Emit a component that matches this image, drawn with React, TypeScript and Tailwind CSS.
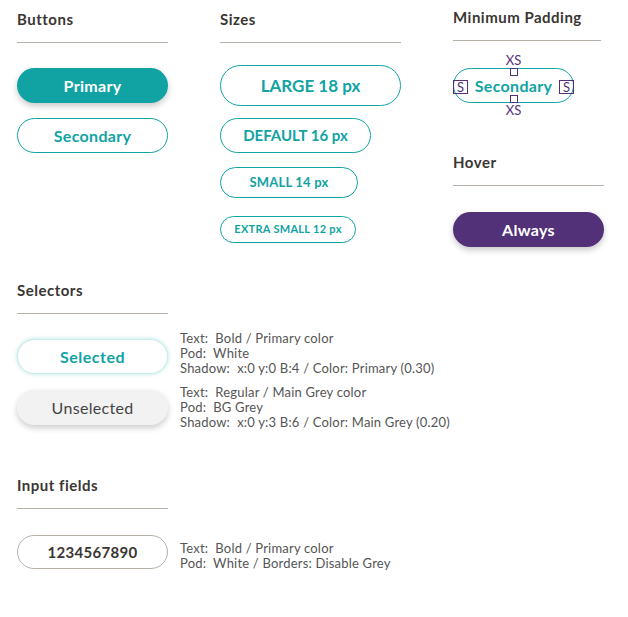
import React from "react";

function Heading({ children, className = "" }: { children: React.ReactNode; className?: string }) {
  return (
    <div
      className={`pt-[9px] pb-[13px] border-b border-[#b7b1a9] text-[15px] leading-[20px] font-bold tracking-[0.5px] text-[#3a3633] ${className}`}
    >
      {children}
    </div>
  );
}

function Desc({ lines }: { lines: string[] }) {
  return (
    <div className="text-[13px] leading-[15px] tracking-[0.2px] text-[#555] whitespace-pre">
      {lines.map((l) => (
        <div key={l}>{l}</div>
      ))}
    </div>
  );
}

export default function App() {
  return (
    <div
      className="w-[628px] h-[617px] bg-white pl-[17px] overflow-hidden"
      style={{ fontFamily: "Lato, 'Open Sans', sans-serif" }}
    >
      {/* Row 1 */}
      <div className="flex items-start">
        {/* Buttons */}
        <div className="w-[151px]">
          <Heading>Buttons</Heading>
          <div className="mt-[25px] h-[35px] rounded-full bg-[#11a3a3] text-white font-bold text-[16px] tracking-[0.3px] flex items-center justify-center shadow-[0_3px_6px_rgba(0,0,0,0.22)]">
            Primary
          </div>
          <div className="mt-[15px] h-[35px] rounded-full border border-[#11a3a3] text-[#11a3a3] font-bold text-[16px] tracking-[0.3px] flex items-center justify-center">
            Secondary
          </div>
        </div>

        {/* Sizes */}
        <div className="w-[181px] ml-[52px]">
          <Heading>Sizes</Heading>
          <div className="mt-[22px] h-[41px] w-[181px] rounded-full border border-[#11a3a3] text-[#11a3a3] font-bold text-[17px] flex items-center justify-center">
            LARGE 18 px
          </div>
          <div className="mt-[12px] h-[35px] w-[151px] rounded-full border border-[#11a3a3] text-[#11a3a3] font-bold text-[15px] flex items-center justify-center">
            DEFAULT 16 px
          </div>
          <div className="mt-[14px] h-[31px] w-[138px] rounded-full border border-[#11a3a3] text-[#11a3a3] font-bold text-[13px] tracking-[0.2px] flex items-center justify-center">
            SMALL 14 px
          </div>
          <div className="mt-[18px] h-[27px] w-[136px] rounded-full border border-[#11a3a3] text-[#11a3a3] font-bold text-[11px] tracking-[0.3px] flex items-center justify-center">
            EXTRA SMALL 12 px
          </div>
        </div>

        {/* Minimum padding / Hover */}
        <div className="w-[151px] ml-[52px]">
          <Heading className="!pt-[7px] w-[148px]">Minimum Padding</Heading>
          <div className="w-[121px]">
            <div className="mt-[12px] h-[15px] text-[13px] leading-[15px] text-[#523178] text-center">XS</div>
            <div className="relative h-[35px] rounded-full border border-[#11a3a3] text-[#11a3a3] font-bold text-[16px] tracking-[0.3px] flex items-center justify-center">
              Secondary
              <span className="absolute left-[-1px] top-[11px] w-[15px] h-[14px] border border-[#523178] text-[#523178] font-normal text-[13px] leading-[12px] tracking-normal flex items-center justify-center">
                S
              </span>
              <span className="absolute right-[-1px] top-[11px] w-[15px] h-[14px] border border-[#523178] text-[#523178] font-normal text-[13px] leading-[12px] tracking-normal flex items-center justify-center">
                S
              </span>
              <span className="absolute left-[56px] top-[-1px] w-[8px] h-[8px] border border-[#523178]" />
              <span className="absolute left-[56px] bottom-[-1px] w-[8px] h-[8px] border border-[#523178]" />
            </div>
            <div className="h-[15px] text-[13px] leading-[15px] text-[#523178] text-center">XS</div>
          </div>

          <Heading className="mt-[25px]">Hover</Heading>
          <div className="mt-[26px] h-[35px] rounded-full bg-[#523178] text-white font-bold text-[16px] tracking-[0.3px] flex items-center justify-center shadow-[0_3px_6px_rgba(0,0,0,0.22)]">
            Always
          </div>
        </div>
      </div>

      {/* Selectors */}
      <div className="mt-[24px] w-[151px]">
        <Heading>Selectors</Heading>
      </div>
      <div className="flex items-start">
        <div className="w-[151px]">
          <div className="mt-[25px] h-[35px] rounded-full bg-white border border-[#c8ecec] text-[#11a3a3] font-bold text-[16px] tracking-[0.5px] flex items-center justify-center shadow-[0_0_4px_rgba(17,163,163,0.3)]">
            Selected
          </div>
          <div className="mt-[16px] h-[35px] rounded-full bg-[#f2f2f2] text-[#444] text-[16px] tracking-[0.3px] flex items-center justify-center shadow-[0_3px_6px_rgba(0,0,0,0.2)]">
            Unselected
          </div>
        </div>
        <div className="ml-[12px]">
          <div className="mt-[17px]">
            <Desc
              lines={[
                "Text:  Bold / Primary color",
                "Pod:  White",
                "Shadow:  x:0 y:0 B:4 / Color: Primary (0.30)",
              ]}
            />
          </div>
          <div className="mt-[9px]">
            <Desc
              lines={[
                "Text:  Regular / Main Grey color",
                "Pod:  BG Grey",
                "Shadow:  x:0 y:3 B:6 / Color: Main Grey (0.20)",
              ]}
            />
          </div>
        </div>
      </div>

      {/* Input fields */}
      <div className="mt-[36px] w-[151px]">
        <Heading>Input fields</Heading>
      </div>
      <div className="flex items-start mt-[26px]">
        <div className="w-[151px] h-[34px] rounded-full border border-[#b7b1a9] bg-white text-[#3a3633] font-bold text-[15px] tracking-[0.3px] flex items-center justify-center">
          1234567890
        </div>
        <div className="ml-[12px] mt-[6px]">
          <Desc lines={["Text:  Bold / Primary color", "Pod:  White / Borders: Disable Grey"]} />
        </div>
      </div>
    </div>
  );
}
